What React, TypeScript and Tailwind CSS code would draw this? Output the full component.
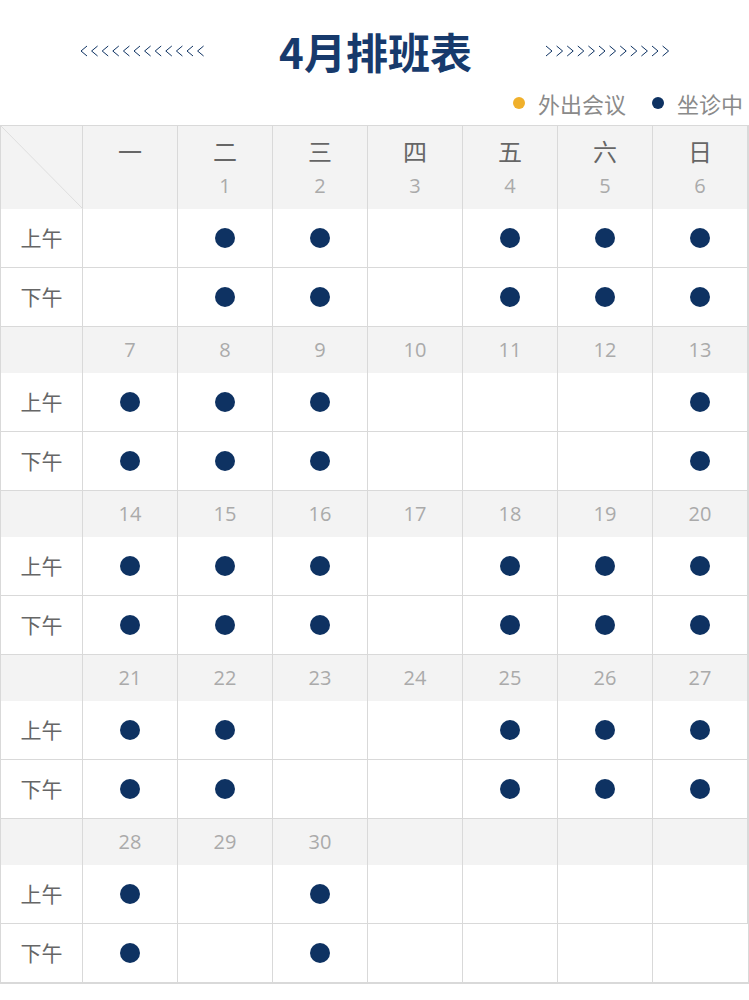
import React from "react"

const NAVY = "#0e3262"

type Week = { days: (number | null)[]; am: number[]; pm: number[] }

const weeks: Week[] = [
    { days: [null, 1, 2, 3, 4, 5, 6], am: [0, 1, 1, 0, 1, 1, 1], pm: [0, 1, 1, 0, 1, 1, 1] },
    { days: [7, 8, 9, 10, 11, 12, 13], am: [1, 1, 1, 0, 0, 0, 1], pm: [1, 1, 1, 0, 0, 0, 1] },
    { days: [14, 15, 16, 17, 18, 19, 20], am: [1, 1, 1, 0, 1, 1, 1], pm: [1, 1, 1, 0, 1, 1, 1] },
    { days: [21, 22, 23, 24, 25, 26, 27], am: [1, 1, 0, 0, 1, 1, 1], pm: [1, 1, 0, 0, 1, 1, 1] },
    { days: [28, 29, 30, null, null, null, null], am: [1, 0, 1, 0, 0, 0, 0], pm: [1, 0, 1, 0, 0, 0, 0] },
]

const weekdays = ["一", "二", "三", "四", "五", "六", "日"]

const cjk = "font-['Noto_Sans_CJK_SC',sans-serif]"
const num = "font-['Open_Sans','Noto_Sans_CJK_SC',sans-serif]"

function Chevrons({ dir }: { dir: "left" | "right" }) {
    return (
        <svg width="128" height="12" viewBox="0 0 128 12">
            {Array.from({ length: 12 }).map((_, i) => {
                const x = i * 10.6 + 1
                const d = dir === "left"
                    ? `M${x + 7} 1 L${x + 1} 6 L${x + 7} 11`
                    : `M${x + 1} 1 L${x + 7} 6 L${x + 1} 11`
                return <path key={i} d={d} fill="none" stroke={NAVY} strokeWidth="1" />
            })}
        </svg>
    )
}

function Dot() {
    return <span className="block w-[20px] h-[20px] rounded-full bg-[#0e3262]" />
}

function SlotRow({ label, marks }: { label: string; marks: number[] }) {
    return (
        <>
            <div className={`h-[59px] flex items-center justify-center border-b border-r border-[#d9d9d9] text-[21px] text-[#666] ${cjk}`}>
                {label}
            </div>
            {marks.map((m, i) => (
                <div key={i} className="h-[59px] flex items-center justify-center border-b border-r border-[#d9d9d9] last:border-r-0">
                    {m ? <Dot /> : null}
                </div>
            ))}
        </>
    )
}

export default function App() {
    return (
        <div className="w-[749px] bg-white pb-[19px]">
            <div className="flex items-center justify-center gap-[72px] pt-[27px] h-[75px] pl-[2px]">
                <Chevrons dir="left" />
                <h1 className={`text-[42px] leading-[48px] font-bold text-[#173a6c] ${cjk}`}>4月排班表</h1>
                <Chevrons dir="right" />
            </div>
            <div className={`flex items-center justify-end h-[50px] pt-[6px] pr-[6px] text-[22px] text-[#8a8a8a] ${cjk}`}>
                <span className="w-[12px] h-[12px] rounded-full bg-[#f0b02b] mr-[13px]" />
                <span className="mr-[26px]">外出会议</span>
                <span className="w-[12px] h-[12px] rounded-full bg-[#0e3262] mr-[13px]" />
                <span>坐诊中</span>
            </div>
            <div className="grid grid-cols-[82px_repeat(7,minmax(0,1fr))] border border-[#d9d9d9]">
                <div className="relative h-[83px] bg-[#f3f3f3] border-r border-[#d9d9d9]">
                    <svg className="absolute inset-0" width="82" height="83" viewBox="0 0 82 83">
                        <line x1="0" y1="0" x2="82" y2="83" stroke="#dedede" strokeWidth="1" />
                    </svg>
                </div>
                {weekdays.map((w, i) => (
                    <div key={w} className="h-[83px] bg-[#f3f3f3] border-r border-[#d9d9d9] last:border-r-0 flex flex-col items-center pt-[9px]">
                        <span className={`text-[24px] leading-[32px] text-[#666] ${cjk}`}>{w}</span>
                        <span className={`text-[20px] leading-[26px] mt-[6px] text-[#aaa] ${num}`}>{weeks[0].days[i]}</span>
                    </div>
                ))}
                {weeks.map((wk, wi) => (
                    <React.Fragment key={wi}>
                        {wi > 0 && (
                            <>
                                <div className="h-[46px] bg-[#f3f3f3] border-r border-[#d9d9d9]" />
                                {wk.days.map((d, i) => (
                                    <div key={i} className={`h-[46px] bg-[#f3f3f3] border-r border-[#d9d9d9] last:border-r-0 flex items-center justify-center text-[20px] text-[#aaa] ${num}`}>
                                        {d}
                                    </div>
                                ))}
                            </>
                        )}
                        <SlotRow label="上午" marks={wk.am} />
                        <SlotRow label="下午" marks={wk.pm} />
                    </React.Fragment>
                ))}
            </div>
        </div>
    )
}
